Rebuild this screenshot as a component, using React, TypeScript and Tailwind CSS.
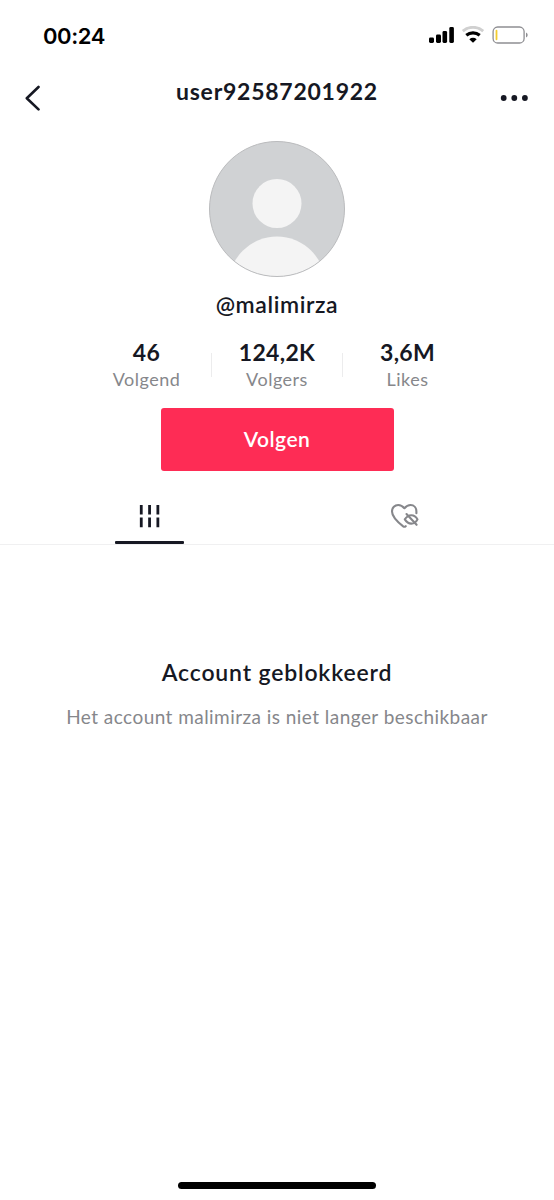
const stats = [
  { value: '46', label: 'Volgend' },
  { value: '124,2K', label: 'Volgers' },
  { value: '3,6M', label: 'Likes' },
];

function StatusBar() {
  return (
    <div className="flex h-[70px] items-center justify-between pl-[43px] pr-[26px] text-black">
      <span className="pt-[2px] font-['Inter',sans-serif] text-[22px] font-semibold leading-none tracking-[-0.4px]">00:24</span>
      <svg width="100" height="18" viewBox="0 0 100 18" fill="none">
        <g fill="#000">
          <rect x="1" y="11.5" width="5" height="5.5" rx="1.4" />
          <rect x="8" y="8.5" width="5" height="8.5" rx="1.4" />
          <rect x="14.5" y="5" width="4.6" height="12" rx="1.4" />
          <rect x="21.3" y="1" width="4.6" height="16" rx="1.4" />
        </g>
        <path d="M34.8 5.1a15.8 15.8 0 0 1 20.4 0" stroke="#d0d0d0" strokeWidth="3" />
        <path d="M38.3 9.3a10.6 10.6 0 0 1 13.4 0" stroke="#000" strokeWidth="3.2" />
        <path d="M41.3 13.2Q45 10.4 48.7 13.2L45 16.8Z" fill="#000" />
        <rect x="65.1" y="1" width="31" height="16" rx="4.6" stroke="#8e8e92" strokeWidth="1.3" />
        <rect x="67.6" y="3.8" width="1.8" height="10.4" rx="0.9" fill="#f3cc2f" />
        <path d="M98 6.5v5q1.7-.8 1.7-2.5T98 6.5Z" fill="#8e8e92" />
      </svg>
    </div>
  );
}

function Header() {
  return (
    <header className="flex h-[71px] justify-between px-[25px]">
      <svg className="mt-[14px]" width="40" height="28" viewBox="0 0 40 28" fill="none" stroke="#161823" strokeWidth="2.6" strokeLinecap="round" strokeLinejoin="round">
        <path d="M13.5 3 1.8 14.2 13.5 25.4" />
      </svg>
      <h1 className="mt-[7px] text-[23px] font-bold leading-[28px] tracking-[0.75px]">user92587201922</h1>
      <svg className="mt-[14px]" width="40" height="28" viewBox="0 0 40 28" fill="#161823">
        <circle cx="14.7" cy="14" r="2.9" />
        <circle cx="25.3" cy="14" r="2.9" />
        <circle cx="35.9" cy="14" r="2.9" />
      </svg>
    </header>
  );
}

function Avatar() {
  return (
    <svg width="136" height="136" viewBox="0 0 136 136">
      <defs>
        <clipPath id="avatar-clip"><circle cx="68" cy="68" r="67.5" /></clipPath>
      </defs>
      <circle cx="68" cy="68" r="67.5" fill="#d0d2d4" />
      <g clipPath="url(#avatar-clip)" fill="#f4f4f4">
        <circle cx="68" cy="62.5" r="24.5" />
        <circle cx="68" cy="144" r="48.5" />
      </g>
      <circle cx="68" cy="68" r="67.5" fill="none" stroke="#babbbd" />
    </svg>
  );
}

function Tabs() {
  return (
    <nav className="flex h-[74px] border-b border-[#f0f0f1] px-[11px]">
      <div className="flex flex-1 flex-col items-center pl-[11px]">
        <svg className="mt-[32px]" width="24" height="26" viewBox="0 0 24 26" fill="#161823">
          <path d="M1.5 2h2.9v10H1.5zM10.1 2H13v10h-2.9zM18.7 2h2.9v10h-2.9zM1.5 15h2.9v10H1.5zM10.1 15H13v10h-2.9zM18.7 15h2.9v10h-2.9z" />
        </svg>
        <span className="mt-[13px] h-[3px] w-[69px] rounded-[1px] bg-[#161823]" />
      </div>
      <div className="flex flex-1 justify-center pr-[11px]">
        <svg className="mt-[31px]" width="30" height="28" viewBox="0 0 30 28" fill="none" stroke="#86878b" strokeWidth="2.1" strokeLinecap="round" strokeLinejoin="round">
          <path d="M26.4 11.2V9.5C26.4 5.7 24 3 20.6 3 18.2 3 16.1 4.2 14.4 6.2 12.7 4.2 10.6 3 8.2 3 4.8 3 2 5.7 2 9.5c0 5.6 6 10.8 11.2 14.9.9.6 1.7.5 2.5-.2" />
          <path d="M14.8 17.4c2-3.2 4.3-4.2 6.5-4.2s4.6 1 6.2 4.2c-1.6 3.2-3.9 4.2-6.2 4.2s-4.5-1-6.5-4.2Z" />
          <path d="m16.5 12 10.1 10.8" />
        </svg>
      </div>
    </nav>
  );
}

export default function App() {
  return (
    <main className="flex h-[1200px] w-[554px] flex-col overflow-hidden bg-white font-['Lato',sans-serif] text-[#161823]">
      <StatusBar />
      <Header />
      <section className="flex flex-col items-center">
        <Avatar />
        <p className="mt-[13px] text-[23px] font-semibold leading-[28px] tracking-[0.6px]">@malimirza</p>
        <div className="mt-[20px] flex h-[56px]">
          {stats.map((stat, i) => (
            <div key={stat.label} className="flex">
              {i > 0 && <span className="mt-[15px] h-[24px] w-px bg-[#ececed]" />}
              <div className="flex w-[129.5px] flex-col items-center">
                <strong className="text-[23px] font-bold leading-[28px] tracking-[0.3px]">{stat.value}</strong>
                <span className="text-[18px] leading-[26px] tracking-[0.5px] text-[#86878b]">{stat.label}</span>
              </div>
            </div>
          ))}
        </div>
        <button className="mt-[14px] h-[63px] w-[233px] rounded-[3px] bg-[#fe2c55] pb-px text-[21px] font-semibold tracking-[0.5px] text-white">Volgen</button>
      </section>
      <Tabs />
      <section className="flex flex-col items-center pt-[113px]">
        <h2 className="text-[23px] font-semibold leading-[28px] tracking-[0.83px]">Account geblokkeerd</h2>
        <p className="mt-[19px] text-[19px] leading-[24px] tracking-[0.45px] text-[#86878b]">Het account malimirza is niet langer beschikbaar</p>
      </section>
      <div className="mb-[11px] mt-auto h-[7px] w-[198px] self-center rounded-full bg-black" />
    </main>
  );
}
